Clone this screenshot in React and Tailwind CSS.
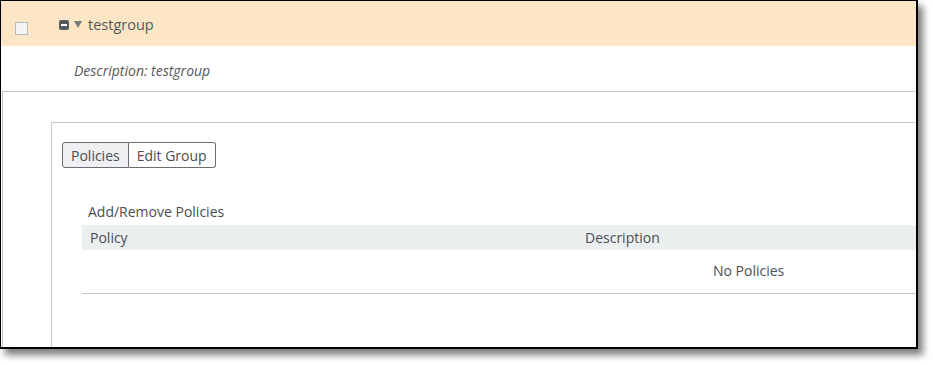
import React from "react";

const font = { fontFamily: '"Open Sans", "Noto Sans", sans-serif' };

const App = () => {
  return (
    <div className="w-[933px] h-[365px] bg-white overflow-hidden" style={font}>
      <div className="w-[918px] h-[349px] border-t border-l border-black border-r-2 border-b-2 bg-white shadow-[5px_6px_7px_rgba(0,0,0,0.5)] overflow-hidden flex flex-col">
        {/* group row */}
        <div className="h-[45px] bg-[#fde6c6] flex items-center shrink-0">
          <div className="ml-[14px] mt-[10px] w-[13px] h-[13px] border border-[#b8bcc0] bg-[#f3f4f5]" />
          <div className="ml-[31px] w-[10px] h-[10px] rounded-[2px] bg-[#555a5e] flex items-center justify-center mt-[2px]">
            <div className="w-[6px] h-[2px] bg-white" />
          </div>
          <svg className="ml-[5px] mt-[2px]" width="8" height="7" viewBox="0 0 8 7">
            <path d="M0 0 L8 0 L4 7 Z" fill="#767b80" />
          </svg>
          <span className="ml-[6px] text-[14.5px] text-[#53575b] mt-[3px]">testgroup</span>
        </div>

        {/* description */}
        <div className="h-[45px] flex items-center pl-[73px] shrink-0">
          <span className="italic text-[14px] text-[#55595d] mt-[4px]">Description: testgroup</span>
        </div>

        {/* details panel */}
        <div className="flex-1 ml-[1px] border-t border-l border-[#c2c6ca] pt-[30px] pl-[48px] flex flex-col">
          <div className="flex-1 border-t border-l border-[#c8c8c8] pl-[10px] pt-[19px]">
            <div className="flex h-[26px] text-[14px] text-[#4a4e52]">
              <div className="px-[8px] flex items-center border border-[#6a6e72] rounded-l-[3px] bg-[#eef0f1]">
                Policies
              </div>
              <div className="px-[8px] flex items-center border border-l-0 border-[#6a6e72] rounded-r-[3px] bg-white">
                Edit Group
              </div>
            </div>

            <div className="ml-[20px] mt-[34px]">
              <div className="pl-[6px] text-[14px] text-[#4a4e52] h-[23px] flex items-center">
                <span className="mt-[-4px]">Add/Remove Policies</span>
              </div>
              <div className="h-[25px] bg-[#eceff0] flex items-center text-[14px] text-[#4a4e52]">
                <span className="pl-[8px] w-[503px]">Policy</span>
                <span>Description</span>
              </div>
              <div className="h-[44px] flex items-center border-b border-[#c4c4c4] text-[14px] text-[#4a4e52]">
                <span className="pl-[631px] mt-[-3px]">No Policies</span>
              </div>
            </div>
          </div>
        </div>
      </div>
    </div>
  );
};

export default App;
